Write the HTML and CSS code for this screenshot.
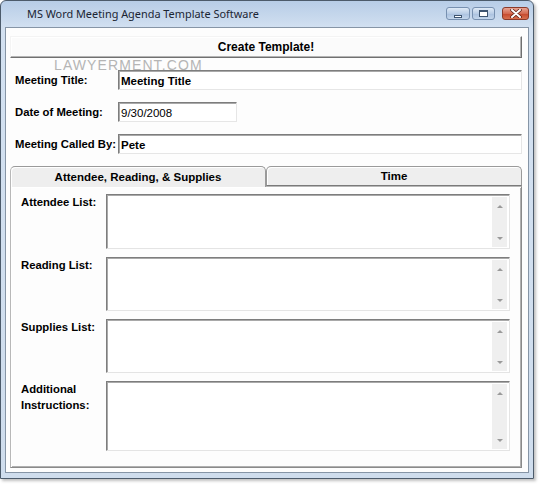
FILE: index.html
```html
<!DOCTYPE html>
<html>
<head>
<meta charset="utf-8">
<link rel="stylesheet" href="styles.css">
</head>
<body>
<div class="window">
  <div class="titlebar">
    <span class="title">MS Word Meeting Agenda Template Software</span>
    <div class="controls">
      <div class="cbtn min"><span class="g-min"></span></div>
      <div class="cbtn max"><span class="g-max"></span></div>
      <div class="cbtn close"><svg width="12" height="9" viewBox="0 0 12 9"><path d="M2 1 L10 8 M10 1 L2 8" stroke="#5a1a10" stroke-width="3.4" stroke-linecap="round"/><path d="M2 1 L10 8 M10 1 L2 8" stroke="#ffffff" stroke-width="2" stroke-linecap="round"/></svg></div>
    </div>
  </div>
  <div class="client">
    <div class="button">Create Template!</div>
    <div class="row">
      <div class="label">Meeting Title:</div>
      <div class="input wide bold">Meeting Title</div>
    </div>
    <div class="row">
      <div class="label">Date of Meeting:</div>
      <div class="input date">9/30/2008</div>
    </div>
    <div class="row">
      <div class="label">Meeting Called By:</div>
      <div class="input wide bold">Pete</div>
    </div>
    <div class="tabs">
      <div class="tab active">Attendee, Reading, &amp; Supplies</div>
      <div class="tab other">Time</div>
    </div>
    <div class="panel">
      <div class="mrow">
        <div class="mlabel">Attendee List:</div>
        <div class="memo h55"><div class="mtext"></div><div class="sb"><span class="up"></span><span class="down"></span></div></div>
      </div>
      <div class="mrow">
        <div class="mlabel">Reading List:</div>
        <div class="memo h54"><div class="mtext"></div><div class="sb"><span class="up"></span><span class="down"></span></div></div>
      </div>
      <div class="mrow">
        <div class="mlabel">Supplies List:</div>
        <div class="memo h54"><div class="mtext"></div><div class="sb"><span class="up"></span><span class="down"></span></div></div>
      </div>
      <div class="mrow">
        <div class="mlabel">Additional<br>Instructions:</div>
        <div class="memo h69"><div class="mtext"></div><div class="sb"><span class="up"></span><span class="down"></span></div></div>
      </div>
    </div>
    <div class="watermark">LAWYERMENT.COM</div>
  </div>
</div>
</body>
</html>
```

FILE: styles.css
```css
html, body {
  margin: 0;
  padding: 0;
  background: #ffffff;
}
body {
  width: 540px;
  height: 484px;
  overflow: hidden;
  font-family: "Liberation Sans", Arial, sans-serif;
  font-size: 11.3px;
  color: #000;
}
.window {
  width: 534px;
  height: 479px;
  box-sizing: border-box;
  border: 1px solid #4c5b6b;
  border-radius: 6px 6px 0 0;
  background: linear-gradient(to bottom, #b7cde7 0px, #cbdbee 20px, #d3e1f1 27px, #cfdded 100%);
  padding: 0 4px 5px 4px;
  display: flex;
  flex-direction: column;
  box-shadow: 2px 2px 3px rgba(0,0,0,0.25);
}
.titlebar {
  height: 26px;
  display: flex;
  align-items: center;
  position: relative;
}
.title {
  font-family: "Noto Sans", "DejaVu Sans", sans-serif;
  font-size: 10.9px;
  color: #1b2533;
  margin-left: 22px;
  margin-top: -1px;
}
.controls {
  margin-left: auto;
  display: flex;
  gap: 2px;
  align-items: flex-start;
  align-self: flex-start;
  margin-top: 6px;
}
.cbtn {
  height: 13px;
  box-sizing: border-box;
  border: 1px solid #7790b0;
  border-radius: 3px;
  background: linear-gradient(to bottom, #dfeaf6, #b9cde6 50%, #a9c0de 51%, #c3d6ec);
  display: flex;
  align-items: center;
  justify-content: center;
}
.min { width: 24px; }
.max { width: 23px; }
.close {
  width: 27px;
  margin-left: 5px;
  border-color: #8a3a2a;
  background: linear-gradient(to bottom, #e8a493, #d46a51 50%, #c4472c 51%, #d8704f);
}
.g-min {
  width: 8px;
  height: 3px;
  box-sizing: border-box;
  border: 1px solid #3d5470;
  background: #fff;
  margin-top: 5px;
}
.g-max {
  width: 9px;
  height: 7px;
  box-sizing: border-box;
  border: 1px solid #3d5470;
  border-top-width: 2px;
  background: #fff;
}
.client {
  flex: 1;
  position: relative;
  border: 1px solid #8695a6;
  background: #fdfdfd;
  padding: 8px 6px 0 4px;
  display: flex;
  flex-direction: column;
}
.button {
  height: 22px;
  box-sizing: border-box;
  border: 1px solid;
  border-color: #f4f4f4 #707070 #707070 #f4f4f4;
  box-shadow: inset -1px -1px 0 #b4b4b4, inset 1px 1px 0 #ffffff;
  background: #fbfbfb;
  font-weight: bold;
  font-size: 12px;
  display: flex;
  align-items: center;
  justify-content: center;
  margin-bottom: 12px;
}
.row {
  display: flex;
  align-items: center;
  height: 20px;
  margin-bottom: 12px;
}
.label {
  width: 108px;
  flex-shrink: 0;
  box-sizing: border-box;
  padding-left: 5px;
  font-weight: bold;
  white-space: nowrap;
}
.input {
  height: 20px;
  box-sizing: border-box;
  border: 1px solid;
  border-color: #7d7d7d #e6e6e6 #e6e6e6 #7d7d7d;
  box-shadow: inset 1px 1px 0 #a9a9a9;
  background: #ffffff;
  display: flex;
  align-items: center;
  padding-left: 2px;
  padding-top: 1px;
  font-size: 11.5px;
}
.wide { flex: 1; }
.date { width: 119px; }
.bold { font-weight: bold; }
.tabs {
  display: flex;
  height: 20px;
  position: relative;
  z-index: 1;
}
.tab {
  box-sizing: border-box;
  border: 1px solid #9a9a9a;
  border-radius: 5px 5px 0 0;
  background: #eeeeee;
  font-weight: bold;
  font-size: 11.5px;
  display: flex;
  align-items: center;
  justify-content: center;
  box-shadow: inset 1px 1px 0 #ffffff;
}
.tab.active {
  width: 256px;
  height: 21px;
  border-bottom: none;
  border-left-color: #b8b8b8;
}
.tab.other {
  flex: 1;
  height: 20px;
  border-bottom-color: #7a7a7a;
}
.panel {
  height: 282px;
  box-sizing: border-box;
  border: 1px solid;
  border-color: #b8b8b8 #8a8a8a #8a8a8a #b8b8b8;
  box-shadow: inset 1px 1px 0 #ffffff, inset -1px -1px 0 #b0b0b0;
  background: #fdfdfd;
  padding: 7px 11px 0 10px;
  display: flex;
  flex-direction: column;
  gap: 8px;
}
.mrow {
  display: flex;
}
.mlabel {
  width: 85px;
  flex-shrink: 0;
  font-weight: bold;
  line-height: 16px;
  box-sizing: border-box;
}
.memo {
  flex: 1;
  box-sizing: border-box;
  border: 1px solid;
  border-color: #7d7d7d #e4e4e4 #e4e4e4 #7d7d7d;
  box-shadow: inset 1px 1px 0 #a9a9a9;
  background: #ffffff;
  display: flex;
}
.h55 { height: 55px; }
.h54 { height: 54px; }
.h69 { height: 70px; }
.mtext { flex: 1; }
.sb {
  width: 15px;
  margin: 2px 2px 1px 0;
  background: #efefef;
  display: flex;
  flex-direction: column;
  justify-content: space-between;
  align-items: center;
  padding: 8px 0 7px 0;
}
.up {
  width: 0;
  height: 0;
  border-left: 3px solid transparent;
  border-right: 3px solid transparent;
  border-bottom: 3px solid #9a9a9a;
}
.down {
  width: 0;
  height: 0;
  border-left: 3px solid transparent;
  border-right: 3px solid transparent;
  border-top: 3px solid #9a9a9a;
}
.watermark {
  position: absolute;
  left: 48px;
  top: 29px;
  font-family: "Liberation Sans", Arial, sans-serif;
  font-size: 14px;
  letter-spacing: 1.1px;
  color: #b5b5b5;
  z-index: 2;
}
```
